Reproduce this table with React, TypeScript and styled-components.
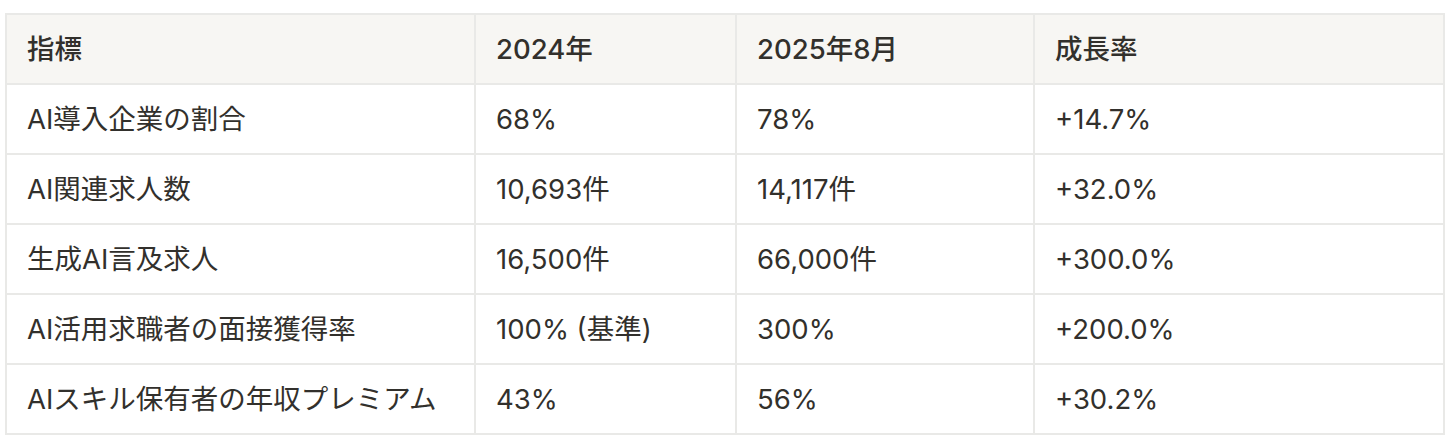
import styled, { createGlobalStyle } from "styled-components";

const GlobalStyle = createGlobalStyle`
  body {
    margin: 0;
    background: #ffffff;
    font-family: Inter, "Noto Sans CJK JP", sans-serif;
    color: #32302c;
  }
`;

const Page = styled.div`
  padding: 13px 8px 10px 5px;
`;

const Table = styled.table`
  width: 1440px;
  table-layout: fixed;
  border-collapse: separate;
  border-spacing: 0;
  border-top: 2px solid #e9e9e7;
  border-left: 2px solid #e9e9e7;
`;

const Cell = styled.td<{ $width?: number }>`
  box-sizing: border-box;
  width: ${(p) => (p.$width ? `${p.$width}px` : "auto")};
  height: 70px;
  padding: 0 20px;
  border-right: 2px solid #e9e9e7;
  border-bottom: 2px solid #e9e9e7;
  font-size: 27.5px;
  line-height: 36px;
  text-align: left;
  vertical-align: middle;
  white-space: nowrap;
`;

const HeadCell = styled(Cell).attrs({ as: "th" })`
  background: #f7f6f3;
  font-weight: 500;
`;

const widths = [469, 261, 298, 410];

const headers = ["指標", "2024年", "2025年8月", "成長率"];

const rows = [
  ["AI導入企業の割合", "68%", "78%", "+14.7%"],
  ["AI関連求人数", "10,693件", "14,117件", "+32.0%"],
  ["生成AI言及求人", "16,500件", "66,000件", "+300.0%"],
  ["AI活用求職者の面接獲得率", "100% (基準)", "300%", "+200.0%"],
  ["AIスキル保有者の年収プレミアム", "43%", "56%", "+30.2%"],
];

const App = () => {
  return (
    <Page>
      <GlobalStyle />
      <Table>
        <thead>
          <tr>
            {headers.map((h, i) => (
              <HeadCell key={h} $width={widths[i]}>
                {h}
              </HeadCell>
            ))}
          </tr>
        </thead>
        <tbody>
          {rows.map((row) => (
            <tr key={row[0]}>
              {row.map((value, i) => (
                <Cell key={i}>{value}</Cell>
              ))}
            </tr>
          ))}
        </tbody>
      </Table>
    </Page>
  );
};

export default App;
